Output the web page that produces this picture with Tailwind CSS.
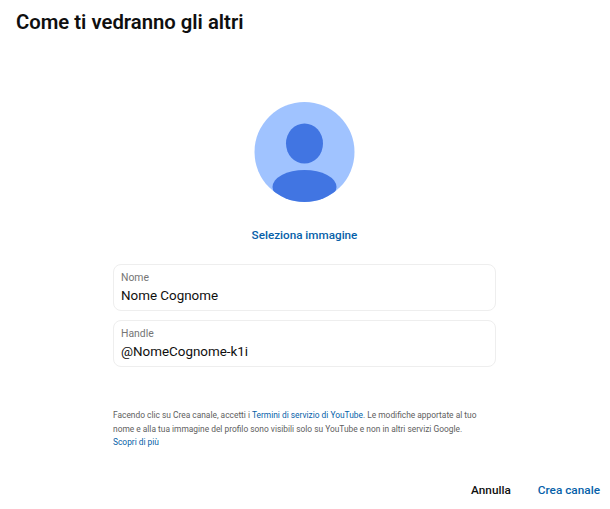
<!DOCTYPE html>
<html><head><meta charset="utf-8"><script src="https://cdn.jsdelivr.net/npm/@tailwindcss/browser@4"></script></head>
<body class="bg-white font-['Roboto',sans-serif]">
<div class="w-[610px] h-[509px] flex flex-col overflow-hidden">
<h1 class="pl-4 pt-[8px] h-[102px] text-[20.3px] leading-[28px] font-semibold text-[#0f0f0f]">Come ti vedranno gli altri</h1>
<div class="flex flex-col items-center pr-[1px]">
<svg class="w-[101px] h-[101px]" viewBox="0 0 101 101"><defs><clipPath id="c"><circle cx="50.5" cy="50" r="50"/></clipPath></defs><circle cx="50.5" cy="50" r="50" fill="#a0c3ff"/><g clip-path="url(#c)"><ellipse cx="50.5" cy="41.5" rx="18.5" ry="20" fill="#4175e2"/><ellipse cx="50.5" cy="85" rx="32" ry="17" fill="#4175e2"/></g></svg>
<div class="mt-[18px] text-[11.7px] leading-[28px] font-medium text-[#065fa9]">Seleziona immagine</div>
</div>
<div class="ml-[113px] mr-[114px] mt-[15px] flex flex-col gap-[9px]">
<div class="h-[47px] rounded-lg border border-[#eeeeee] px-[7px] pt-[6px]"><div class="text-[10.4px] leading-[14px] text-[#757575]">Nome</div><div class="text-[13.4px] leading-[22px] text-[#0f0f0f]">Nome Cognome</div></div>
<div class="h-[47px] rounded-lg border border-[#eeeeee] px-[7px] pt-[6px]"><div class="text-[10.4px] leading-[14px] text-[#757575]">Handle</div><div class="text-[13.4px] leading-[22px] text-[#0f0f0f]">@NomeCognome-k1i</div></div>
</div>
<p class="mx-[113px] mt-[42px] text-[8.4px] leading-[13.5px] text-[#606060]">Facendo clic su Crea canale, accetti i <span class="text-[#065fa9]">Termini di servizio di YouTube</span>. Le modifiche apportate al tuo<br>nome e alla tua immagine del profilo sono visibili solo su YouTube e non in altri servizi Google.<br><span class="text-[#065fa9]">Scopri di più</span></p>
<div class="mt-[32px] flex justify-end gap-[27px] pr-[10px] text-[11.8px] leading-[16px] font-medium"><span class="text-[#0f0f0f]">Annulla</span><span class="text-[#065fa9]">Crea canale</span></div>
</div>
</body></html>
